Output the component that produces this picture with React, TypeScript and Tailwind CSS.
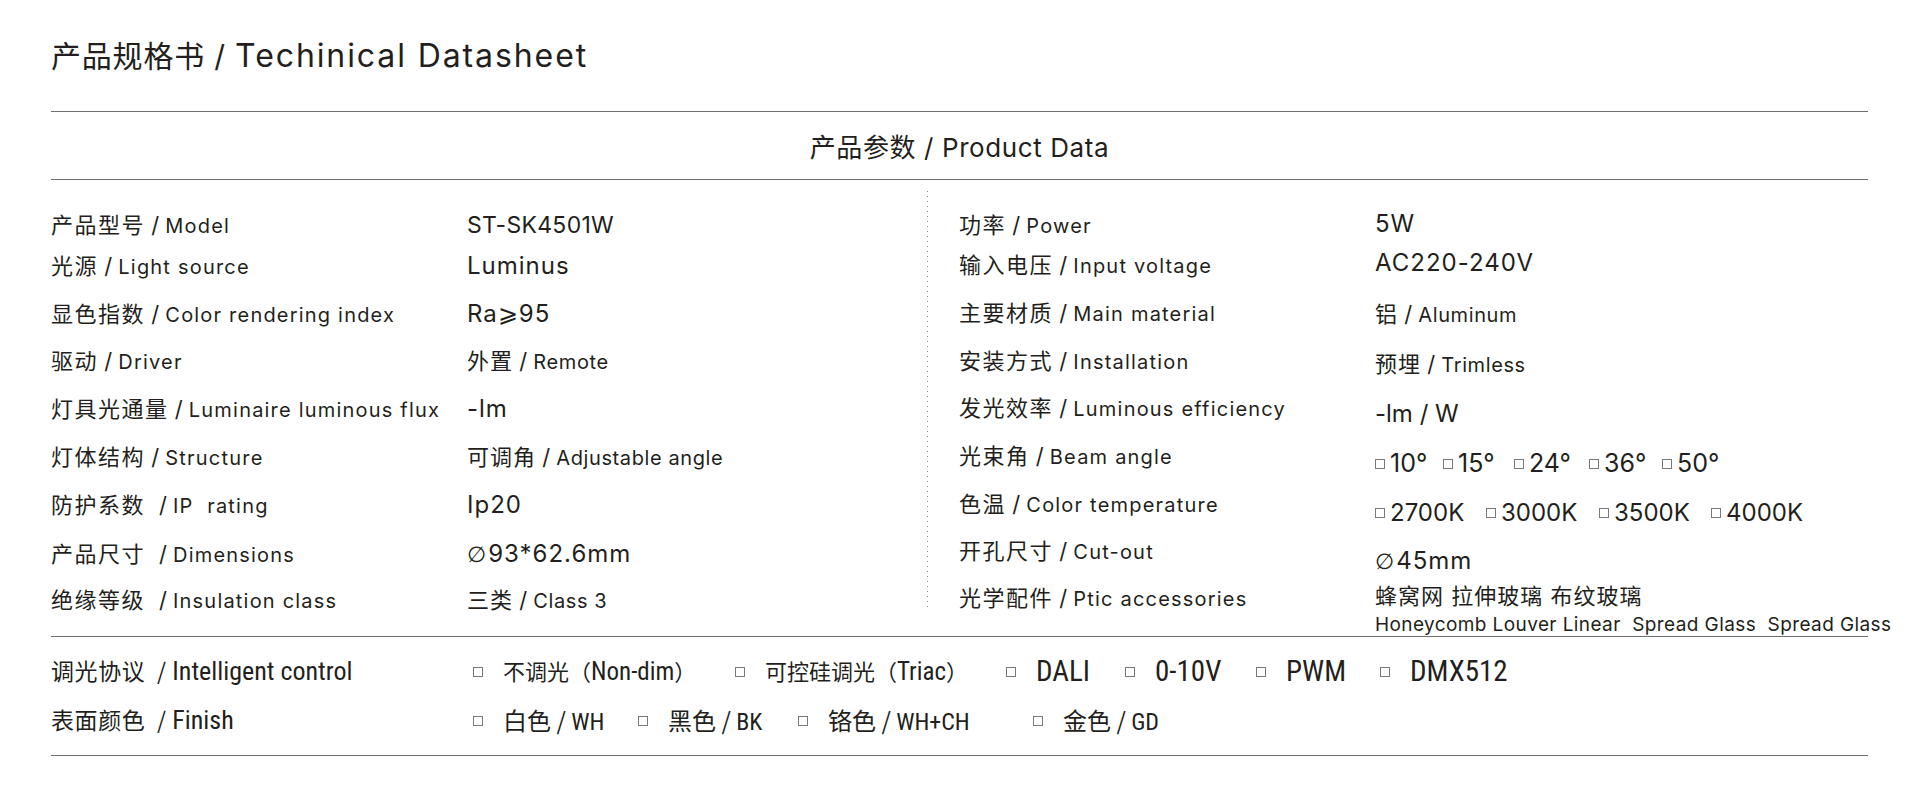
import React from 'react'

type Row = { zh: string; en: string; h: string }

// label rows share heights on both halves
const leftRows: (Row & { value: React.ReactNode })[] = [
  { zh: '产品型号', en: 'Model', h: 'h-[34px]', value: <span className="text-[23px] tracking-[0.3px]">ST-SK4501W</span> },
  { zh: '光源', en: 'Light source', h: 'h-[48px]', value: <Big>Luminus</Big> },
  { zh: '显色指数', en: 'Color rendering index', h: 'h-[48px]', value: <Big>Ra⩾95</Big> },
  { zh: '驱动', en: 'Driver', h: 'h-[46px]', value: <Mixed zh="外置" en="Remote" /> },
  { zh: '灯具光通量', en: 'Luminaire luminous flux', h: 'h-[50px]', value: <Big>-lm</Big> },
  { zh: '灯体结构', en: 'Structure', h: 'h-[46px]', value: <Mixed zh="可调角" en="Adjustable angle" /> },
  { zh: '防护系数 ', en: 'IP  rating', h: 'h-[50px]', value: <Big>Ip20</Big> },
  { zh: '产品尺寸 ', en: 'Dimensions', h: 'h-[48px]', value: <Big><Dia />93*62.6mm</Big> },
  { zh: '绝缘等级 ', en: 'Insulation class', h: 'h-[44px]', value: <Mixed zh="三类" en="Class 3" /> },
]

const rightRows: Row[] = [
  { zh: '功率', en: 'Power', h: 'h-[34px]' },
  { zh: '输入电压', en: 'Input voltage', h: 'h-[46px]' },
  { zh: '主要材质', en: 'Main material', h: 'h-[50px]' },
  { zh: '安装方式', en: 'Installation', h: 'h-[46px]' },
  { zh: '发光效率', en: 'Luminous efficiency', h: 'h-[48px]' },
  { zh: '光束角', en: 'Beam angle', h: 'h-[48px]' },
  { zh: '色温', en: 'Color temperature', h: 'h-[48px]' },
  { zh: '开孔尺寸', en: 'Cut-out', h: 'h-[46px]' },
  { zh: '光学配件', en: 'Ptic accessories', h: 'h-[48px]' },
]

const beams = [
  { t: '10°', w: 'w-[68px]' },
  { t: '15°', w: 'w-[71px]' },
  { t: '24°', w: 'w-[75px]' },
  { t: '36°', w: 'w-[73px]' },
  { t: '50°', w: '' },
]

const temps = [
  { t: '2700K', w: 'w-[111px]' },
  { t: '3000K', w: 'w-[113px]' },
  { t: '3500K', w: 'w-[112px]' },
  { t: '4000K', w: '' },
]

const zhFont = "font-['Noto_Sans_CJK_SC',sans-serif]"

const dimming = [
  { node: <><span className={`text-[22px] ${zhFont}`}>不调光（</span><span className="text-[25px]">Non-dim</span><span className={`text-[22px] ${zhFont}`}>）</span></>, w: 'w-[262px]' },
  { node: <><span className={`text-[22px] ${zhFont}`}>可控硅调光（</span><span className="text-[25px]">Triac</span><span className={`text-[22px] ${zhFont}`}>）</span></>, w: 'w-[271px]' },
  { node: <span className="text-[29px]">DALI</span>, w: 'w-[119px]' },
  { node: <span className="text-[29px]">0-10V</span>, w: 'w-[131px]' },
  { node: <span className="text-[29px]">PWM</span>, w: 'w-[124px]' },
  { node: <span className="text-[29px]">DMX512</span>, w: '' },
]

const finishes = [
  { zh: '白色', en: 'WH', w: 'w-[165px]' },
  { zh: '黑色', en: 'BK', w: 'w-[160px]' },
  { zh: '铬色', en: 'WH+CH', w: 'w-[235px]' },
  { zh: '金色', en: 'GD', w: '' },
]

function Dia() {
  return <span className="font-['DejaVu_Sans',sans-serif] text-[22px] mr-[1px]">∅</span>
}

function Big({ children }: { children: React.ReactNode }) {
  return <span className="text-[24px] tracking-[1px]">{children}</span>
}

function Mixed({ zh, en }: { zh: string; en: string }) {
  return (
    <span className="whitespace-pre">
      <span className="text-[22px] tracking-[1px]">{zh}</span>
      <span className="text-[22px]"> / </span>
      <span className="text-[20px] tracking-[0.6px]">{en}</span>
    </span>
  )
}

function Label({ zh, en }: { zh: string; en: string }) {
  return (
    <span className="whitespace-pre">
      <span className="text-[22px] tracking-[1.5px]">{zh}</span>
      <span className="text-[22px]"> / </span>
      <span className="text-[20px] tracking-[1.2px]">{en}</span>
    </span>
  )
}

function Box() {
  return <span className="inline-block w-[10px] h-[10px] border border-[#7a7a7a] shrink-0" />
}

export default function App() {
  return (
    <div className="w-[1921px] h-[801px] bg-white text-[#231f20] font-['Inter','Noto_Sans_CJK_SC',sans-serif] pl-[51px] pr-[53px]">
      {/* Title */}
      <div className="h-[111px] flex items-center">
        <h1 className="font-normal whitespace-pre">
          <span className="text-[30px] tracking-[0.8px]">产品规格书 / </span>
          <span className="text-[32px] tracking-[1.9px]">Techinical Datasheet</span>
        </h1>
      </div>
      <div className="h-px bg-[#707070]" />

      {/* Section header */}
      <div className="h-[67px] flex items-center justify-center pt-[3px]">
        <span className="text-[26px] tracking-[0.6px]">产品参数 / Product Data</span>
      </div>
      <div className="h-px bg-[#707070]" />

      {/* Data grid */}
      <div className="h-[456px] grid grid-cols-[416px_460px_32px_416px_1fr]">
        <div className="flex flex-col pt-[28px]">
          {leftRows.map(r => (
            <div key={r.en} className={`${r.h} flex items-center`}>
              <Label zh={r.zh} en={r.en} />
            </div>
          ))}
        </div>
        <div className="flex flex-col pt-[28px]">
          {leftRows.map(r => (
            <div key={r.en} className={`${r.h} flex items-center`}>
              {r.value}
            </div>
          ))}
        </div>
        <div className="pt-[11px]">
          <div className="w-px h-[419px] bg-[linear-gradient(to_bottom,#8a8a8a_1px,transparent_1px)] bg-[length:1px_5px]" />
        </div>
        <div className="flex flex-col pt-[28px]">
          {rightRows.map(r => (
            <div key={r.en} className={`${r.h} flex items-center`}>
              <Label zh={r.zh} en={r.en} />
            </div>
          ))}
        </div>
        <div className="flex flex-col pt-[28px] whitespace-nowrap">
          <div className="h-[32px] flex items-center"><Big>5W</Big></div>
          <div className="h-[46px] flex items-center"><Big>AC220-240V</Big></div>
          <div className="h-[56px] flex items-center"><Mixed zh="铝" en="Aluminum" /></div>
          <div className="h-[44px] flex items-center"><Mixed zh="预埋" en="Trimless" /></div>
          <div className="h-[56px] flex items-center"><span className="text-[24px]">-lm / W</span></div>
          <div className="h-[44px] flex items-center">
            {beams.map(b => (
              <span key={b.t} className={`${b.w} flex items-center gap-[5px]`}>
                <Box />
                <span className="text-[25px]">{b.t}</span>
              </span>
            ))}
          </div>
          <div className="h-[54px] flex items-center">
            {temps.map(t => (
              <span key={t.t} className={`${t.w} flex items-center gap-[5px]`}>
                <Box />
                <span className="text-[24px]">{t.t}</span>
              </span>
            ))}
          </div>
          <div className="h-[42px] flex items-center"><Big><Dia />45mm</Big></div>
          <div className="h-[28px] flex items-center text-[22px] tracking-[1px] whitespace-pre">蜂窝网 拉伸玻璃 布纹玻璃</div>
          <div className="h-[30px] flex items-center text-[19px] tracking-[0.4px] whitespace-pre">Honeycomb Louver Linear  Spread Glass  Spread Glass</div>
        </div>
      </div>
      <div className="h-px bg-[#707070]" />

      {/* Control & finish */}
      <div className="pt-[10px] pb-[10px] font-['Roboto_Condensed','Open_Sans','Noto_Sans_CJK_SC',sans-serif] font-stretch-condensed">
        <div className="h-[49px] flex items-center">
          <div className="w-[422px] whitespace-pre">
            <span className={`text-[23px] tracking-[0.6px] ${zhFont}`}>调光协议  / </span>
            <span className="text-[26px]">Intelligent control</span>
          </div>
          {dimming.map((d, i) => (
            <div key={i} className={`${d.w} flex items-center gap-[20px] whitespace-pre`}>
              <Box />
              <span>{d.node}</span>
            </div>
          ))}
        </div>
        <div className="h-[49px] flex items-center">
          <div className="w-[422px] whitespace-pre">
            <span className={`text-[23px] tracking-[0.6px] ${zhFont}`}>表面颜色  / </span>
            <span className="text-[26px]">Finish</span>
          </div>
          {finishes.map(f => (
            <div key={f.zh} className={`${f.w} flex items-center gap-[20px] whitespace-pre`}>
              <Box />
              <span>
                <span className={`text-[24px] ${zhFont}`}>{f.zh} / </span>
                <span className="text-[24px]">{f.en}</span>
              </span>
            </div>
          ))}
        </div>
      </div>
      <div className="h-px bg-[#707070]" />
    </div>
  )
}
